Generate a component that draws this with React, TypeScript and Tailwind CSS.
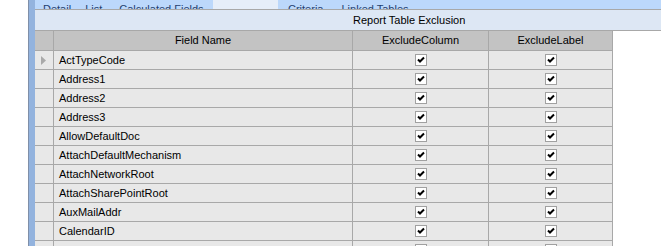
import React from "react";

const FIELDS = [
  "ActTypeCode",
  "Address1",
  "Address2",
  "Address3",
  "AllowDefaultDoc",
  "AttachDefaultMechanism",
  "AttachNetworkRoot",
  "AttachSharePointRoot",
  "AuxMailAddr",
  "CalendarID",
  "ClaimUserId",
];

const CheckBox = () => (
  <span className="inline-flex h-[12px] w-[12px] items-center justify-center border border-[#a0a0a0] bg-white">
    <svg width="8" height="8" viewBox="0 0 8 8">
      <path d="M1 3.5 L3 5.5 L7 1.5" fill="none" stroke="#000" strokeWidth="2" />
    </svg>
  </span>
);

const App = () => {
  return (
    <div
      className="flex h-[246px] w-[661px] overflow-hidden bg-white text-[11px] text-black"
      style={{ fontFamily: '"Liberation Sans", Arial, sans-serif' }}
    >
      <div className="w-[28px] shrink-0 bg-white" />
      <div className="w-[1px] shrink-0 bg-[#7f8fa8]" />
      <div className="w-[6px] shrink-0 bg-[#93b3de]" />

      <div className="flex min-w-0 flex-1 flex-col">
        {/* tabs, mostly scrolled out of view */}
        <div className="flex h-[9px] shrink-0 items-end overflow-hidden bg-[#bcd8fb] leading-[13px] text-[#1f3f6f]">
          <div className="flex h-[9px] w-[178px] items-end">
            <span className="ml-[8px] -mb-[7px]">Detail</span>
            <span className="ml-[14px] -mb-[7px]">List</span>
            <span className="ml-[17px] -mb-[7px]">Calculated Fields</span>
          </div>
          <span className="h-[9px] w-[65px] bg-[#e6eef9]" />
          <span className="ml-[10px] -mb-[7px]">Criteria</span>
          <span className="ml-[18px] -mb-[7px]">Linked Tables</span>
        </div>
        <div className="h-[1px] shrink-0 bg-[#a8a8a8]" />

        {/* panel title */}
        <div className="flex h-[20px] shrink-0 items-center bg-[#dde7f4] pl-[318px]">
          Report Table Exclusion
        </div>
        <div className="h-[1px] shrink-0 bg-[#a8a8a8]" />

        {/* grid */}
        <div className="flex flex-col">
          <div className="flex h-[20px] shrink-0">
            <div className="w-[19px] border-r border-b border-[#a8a8a8] bg-[#c3c3c3]" />
            <div className="flex w-[299px] items-center justify-center border-r border-b border-[#a8a8a8] bg-[#c3c3c3]">
              Field Name
            </div>
            <div className="flex w-[136px] items-center justify-center border-r border-b border-[#a8a8a8] bg-[#c3c3c3]">
              ExcludeColumn
            </div>
            <div className="flex w-[124px] items-center justify-center border-r border-b border-[#a8a8a8] bg-[#c3c3c3]">
              ExcludeLabel
            </div>
          </div>

          {FIELDS.map((name, i) => (
            <div key={name} className="flex h-[19px] shrink-0">
              <div className="flex w-[19px] items-center border-r border-b border-[#a8a8a8] bg-[#e8e8e8] pl-[6px]">
                {i === 0 && (
                  <svg width="5" height="9" viewBox="0 0 5 9">
                    <path d="M0 0 L5 4.5 L0 9 Z" fill="#a9a9a9" />
                  </svg>
                )}
              </div>
              <div className="flex w-[299px] items-center border-r border-b border-[#a8a8a8] bg-[#e8e8e8] pl-[5px]">
                {name}
              </div>
              <div className="flex w-[136px] items-center justify-center border-r border-b border-[#a8a8a8] bg-[#e8e8e8]">
                <CheckBox />
              </div>
              <div className="flex w-[124px] items-center justify-center border-r border-b border-[#a8a8a8] bg-[#e8e8e8]">
                <CheckBox />
              </div>
            </div>
          ))}
        </div>
      </div>
    </div>
  );
};

export default App;
